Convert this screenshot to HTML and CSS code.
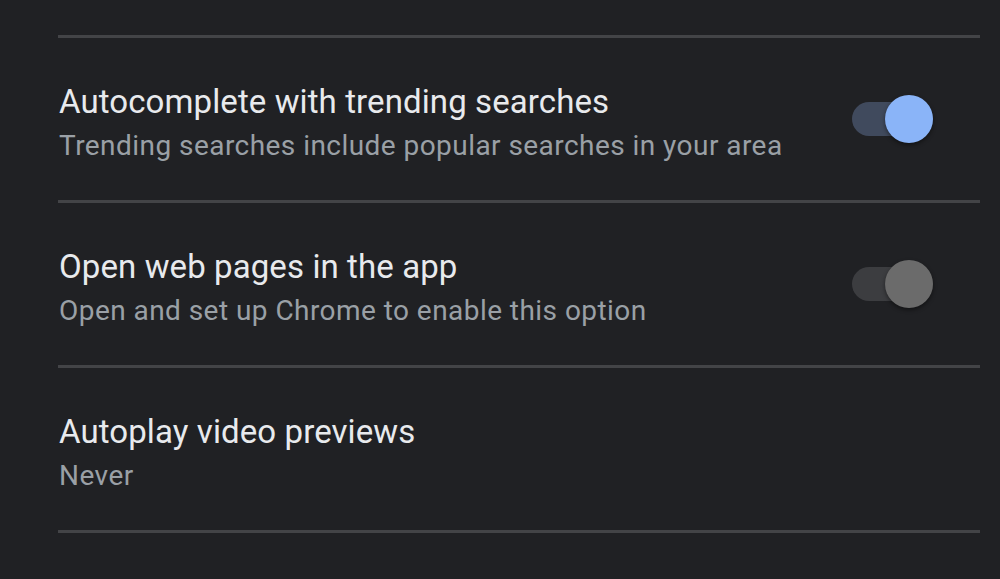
FILE: index.html
```html
<!DOCTYPE html>
<html>
<head>
<meta charset="utf-8">
<link rel="stylesheet" href="styles.css">
</head>
<body>
<div class="list">
  <div class="divider"></div>
  <div class="row">
    <div class="text">
      <div class="title">Autocomplete with trending searches</div>
      <div class="sub">Trending searches include popular searches in your area</div>
    </div>
    <div class="switch on"><span class="track"></span><span class="thumb"></span></div>
  </div>
  <div class="divider"></div>
  <div class="row">
    <div class="text">
      <div class="title">Open web pages in the app</div>
      <div class="sub">Open and set up Chrome to enable this option</div>
    </div>
    <div class="switch off"><span class="track"></span><span class="thumb"></span></div>
  </div>
  <div class="divider"></div>
  <div class="row">
    <div class="text">
      <div class="title">Autoplay video previews</div>
      <div class="sub">Never</div>
    </div>
  </div>
  <div class="divider"></div>
</div>
</body>
</html>
```

FILE: styles.css
```css
html, body {
  margin: 0;
  background: #202124;
  height: 100%;
  overflow: hidden;
}
.list {
  padding: 35px 20px 0 58px;
  font-family: Roboto, "Liberation Sans", sans-serif;
}
.divider {
  height: 3px;
  background: #434447;
}
.row {
  height: 162px;
  box-sizing: border-box;
  padding: 43px 47px 32px 1px;
  display: flex;
  align-items: center;
  justify-content: space-between;
}
.text {
  align-self: flex-start;
}
.title {
  font-size: 33px;
  line-height: 42px;
  letter-spacing: 0.1px;
  color: #e8eaed;
}
.sub {
  font-size: 28px;
  line-height: 45px;
  letter-spacing: 0.45px;
  color: #9aa0a6;
}
.switch {
  position: relative;
  width: 81px;
  height: 48px;
  margin-top: -43px;
  margin-bottom: -32px;
}
.track {
  position: absolute;
  left: 0;
  right: 0;
  top: 7px;
  height: 34px;
  border-radius: 17px;
}
.thumb {
  position: absolute;
  right: 0;
  top: 0;
  width: 48px;
  height: 48px;
  border-radius: 50%;
  box-shadow: 0 2px 4px rgba(0, 0, 0, 0.45);
}
.on .track { background: #404a5d; }
.on .thumb { background: #8ab4f8; }
.off .track { background: #3c3d40; }
.off .thumb { background: #6b6b6b; }
```
